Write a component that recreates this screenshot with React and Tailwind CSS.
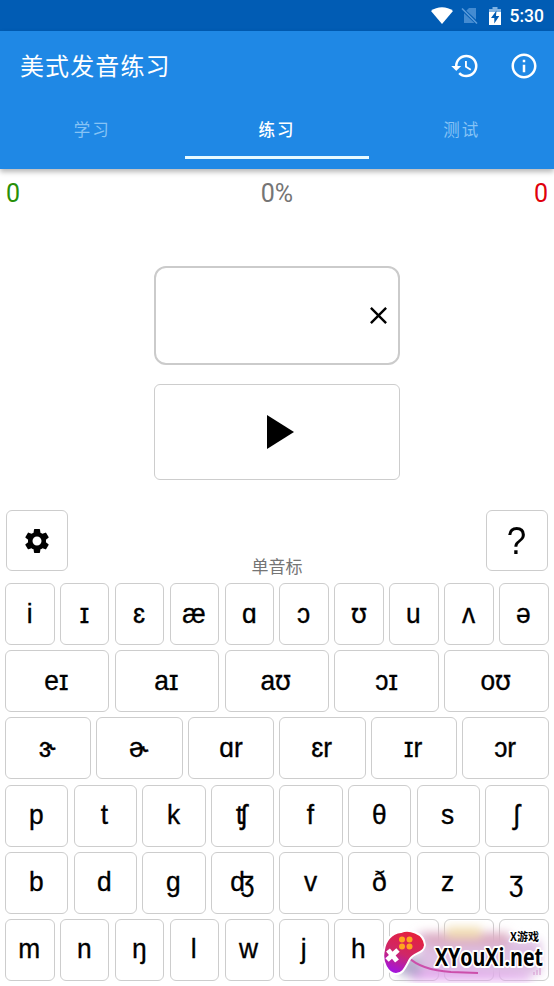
import React, { useState } from "react";
import { MdHistory, MdInfoOutline, MdSettings, MdClose } from "react-icons/md";

const KEY_ROWS = [
  { cols: "grid-cols-10", keys: ["i", "ɪ", "ɛ", "æ", "ɑ", "ɔ", "ʊ", "u", "ʌ", "ə"] },
  { cols: "grid-cols-5", keys: ["eɪ", "aɪ", "aʊ", "ɔɪ", "oʊ"] },
  { cols: "grid-cols-6", keys: ["ɝ", "ɚ", "ɑr", "ɛr", "ɪr", "ɔr"] },
  { cols: "grid-cols-8", keys: ["p", "t", "k", "ʧ", "f", "θ", "s", "ʃ"] },
  { cols: "grid-cols-8", keys: ["b", "d", "g", "ʤ", "v", "ð", "z", "ʒ"] },
  { cols: "grid-cols-10", keys: ["m", "n", "ŋ", "l", "w", "j", "h", "", "", ""] },
];

const TABS = ["学习", "练习", "测试"];

const StatusBar = () => (
  <div className="flex h-[31px] items-center justify-end bg-[#015cb4] pr-[10px] text-white">
    <svg className="mr-[8px] h-[18px] w-[22px]" viewBox="0 0 22 18" fill="currentColor">
      <path d="M0 4C6-1 16-1 22 4L11 17z" />
    </svg>
    <svg className="mr-[10px] h-[18px] w-[18px] text-[#5b9bdb]" viewBox="0 0 18 18">
      <path d="M8 1h7v15H3V6z" fill="currentColor" opacity="0.75" />
      <path d="M0 1l17 16" stroke="#015cb4" strokeWidth="3.4" />
      <path d="M1 1.500l15 15" stroke="currentColor" strokeWidth="1.6" />
    </svg>
    <svg className="mr-[9px] h-[18px] w-[12px]" viewBox="0 0 12 18">
      <path d="M0 2h3.500V0h5v2H12v4H0z" fill="#7fb2e3" />
      <path d="M0 5h12v13H0z" fill="#fff" />
      <path d="M7.500 3.500L2 11h3.300v5.500L10.300 9H7z" fill="#015cb4" />
    </svg>
    <span className="pt-[2px] font-['Roboto',sans-serif] text-[17.5px] leading-none font-medium">5:30</span>
  </div>
);

// ʊ is set in Noto Sans, whose glyph has the flat serifs
const Key = ({ label }) => (
  <button className="flex h-[62px] min-w-0 items-center justify-center rounded-[6px] border border-[#cdcdcd] bg-white pb-[1px] font-['Liberation_Sans',sans-serif] text-[28px] leading-none text-black">
    <span className="-translate-x-[0.5px] scale-x-[0.94] [-webkit-text-stroke:0.35px_black]">
      {label.replace("ʊ", "")}
      {label.includes("ʊ") && <span className="font-['Noto_Sans',sans-serif] leading-[0]">ʊ</span>}
    </span>
  </button>
);

const Watermark = () => (
  <div className="absolute right-[3px] bottom-[3px] h-[62px] w-[170px]">
    <svg className="absolute inset-0 h-full w-full" viewBox="0 0 170 62">
      <defs>
        <linearGradient id="pad" x1="0.6" y1="0" x2="0.2" y2="1">
          <stop offset="0" stopColor="#e5213d" />
          <stop offset="0.5" stopColor="#cf2767" />
          <stop offset="1" stopColor="#9d12ed" />
        </linearGradient>
        <filter id="soft" x="-20%" y="-30%" width="140%" height="160%">
          <feGaussianBlur stdDeviation="5" />
        </filter>
      </defs>
      <g filter="url(#soft)">
        <path d="M35 14h70l55 6v33H42z" fill="#dec0e3" />
        <path d="M38 11h90v15H48z" fill="#dba7bd" opacity="0.8" />
        <path d="M66 6h34v11H66z" fill="#f2deb2" />
        <path d="M30 48l60 2 60 4v6H30z" fill="#df98ec" opacity="0.75" />
        <path d="M18 35h22v20H18z" fill="#998eb9" opacity="0.7" />
      </g>
      <path d="M27 36Q40 49 70 51L97 52" fill="none" stroke="#cc4fab" strokeWidth="2" />
      <path
        d="M3 29C4 20 10 12 20 11C27 8 43 11 44 24C43 33 33 31 29 38C24 47 22 53 15 53C7 53 0 41 3 29Z"
        fill="url(#pad)"
        stroke="#fff"
        strokeWidth="2"
      />
      <g fill="#ffa51f">
        <circle cx="21" cy="18.500" r="3" />
        <circle cx="28.500" cy="18.500" r="3" />
        <circle cx="21" cy="25.500" r="3" />
        <circle cx="28.500" cy="25.500" r="3" />
      </g>
      <path d="M7 29l9 11M17 29L6 39" stroke="#fff" strokeWidth="5" />
      <path d="M156 49v5M153 51v3M159 47v7" stroke="#d394ce" />
      <g fill="#000" stroke="#fff" strokeLinejoin="round" paintOrder="stroke" fontWeight="700">
        <text x="129" y="20" fontSize="11" strokeWidth="3" textLength="29" lengthAdjust="spacingAndGlyphs" className="font-['Noto_Sans_CJK_SC',sans-serif]">
          X游戏
        </text>
        <text x="54" y="45" fontSize="25" strokeWidth="4" textLength="108" lengthAdjust="spacingAndGlyphs" className="font-['Open_Sans',sans-serif]">
          XYouXi.net
        </text>
      </g>
    </svg>
  </div>
);

export default function App() {
  const [activeTab, setActiveTab] = useState(1);

  return (
    <div className="relative flex h-[986px] w-[554px] flex-col overflow-hidden bg-white font-['Noto_Sans_CJK_SC',sans-serif]">
      <StatusBar />

      {/* App bar */}
      <header className="h-[138px] shrink-0 bg-[#1f88e5] text-white shadow-[0_3px_5px_rgba(0,0,0,0.28)]">
        <div className="flex h-[69px] items-center pr-[15px] pl-[20px]">
          <h1 className="flex-1 pb-[2px] text-[24px] leading-none tracking-[1.1px]">美式发音练习</h1>
          <MdHistory className="mr-[29px] size-[30px]" />
          <MdInfoOutline className="size-[30px]" />
        </div>
        <nav className="grid h-[59px] grid-cols-3">
          {TABS.map((tab, idx) => (
            <button
              key={tab}
              onClick={() => setActiveTab(idx)}
              className={
                activeTab === idx
                  ? "border-b-[3px] border-[#e7faff] pt-[3px] text-[16.5px] font-medium tracking-[2px] text-white"
                  : "border-b-[3px] border-transparent pt-[3px] text-[16.5px] tracking-[2px] text-[#86c3f5]"
              }
            >
              {tab}
            </button>
          ))}
        </nav>
      </header>

      {/* Score */}
      <div className="grid h-[49px] shrink-0 grid-cols-3 px-[6px] font-['Roboto',sans-serif] text-[25px] leading-[49px]">
        <span className="text-[#288f08]">0</span>
        <span className="text-center text-[#757575]">0%</span>
        <span className="text-right text-[#e0000c]">0</span>
      </div>

      {/* Answer and play */}
      <div className="mt-[48px] flex flex-col items-center">
        <div className="flex h-[99px] w-[246px] items-center justify-end rounded-[12px] border-2 border-[#cbcbcb] pr-[5px]">
          <MdClose className="size-[29px] text-black" />
        </div>
        <button className="mt-[19px] flex h-[96px] w-[246px] items-center justify-center rounded-[6px] border border-[#cdcdcd]">
          <svg className="ml-[6px] h-[34px] w-[27px]" viewBox="0 0 27 34">
            <path d="M0 0L27 17L0 34z" />
          </svg>
        </button>
      </div>

      {/* Keyboard tools */}
      <div className="mt-[30px] flex h-[73px] shrink-0 items-start justify-between px-[6px]">
        <button className="flex h-[61px] w-[62px] items-center justify-center rounded-[6px] border border-[#cdcdcd]">
          <MdSettings className="size-[30px] text-black" />
        </button>
        <span className="mt-[46px] text-[17px] leading-[20px] text-[#757575]">单音标</span>
        <button className="flex h-[61px] w-[62px] items-center justify-center rounded-[6px] border border-[#cdcdcd] font-['Liberation_Sans',sans-serif] text-[38px] leading-none">
          <span className="scale-x-[0.92]">?</span>
        </button>
      </div>

      <div className="flex flex-col gap-[5.2px] pr-[5.500px] pl-[5px]">
        {KEY_ROWS.map((row, idx) => (
          <div key={idx} className={`grid gap-[5.3px] ${row.cols}`}>
            {row.keys.map((label, i) => (
              <Key key={i} label={label} />
            ))}
          </div>
        ))}
      </div>

      <Watermark />
    </div>
  );
}
